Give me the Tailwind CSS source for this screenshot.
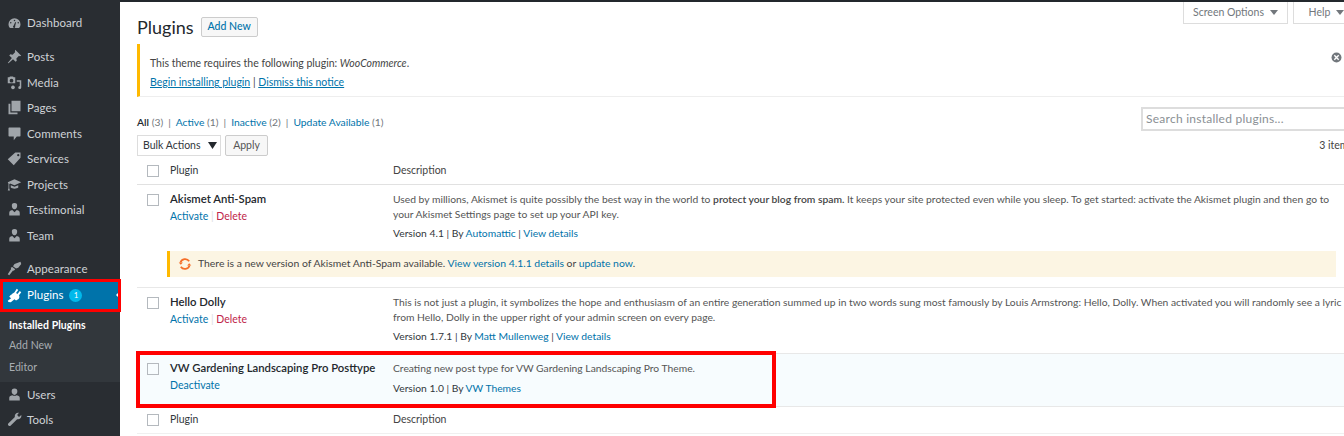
<!DOCTYPE html>
<html><head><meta charset="utf-8"><script src="https://cdn.jsdelivr.net/npm/@tailwindcss/browser@4"></script></head>
<body class="bg-white">
<div class="flex w-[1344px] h-[436px] overflow-hidden font-['Lato','Noto_Sans',sans-serif] text-[10.5px] text-[#444] bg-white">
<aside class="w-[120px] h-full shrink-0 bg-[#292d32] text-[#cfd2d6] text-[11.5px] tracking-[0.05px] relative flex flex-col pt-[10px]">
  <div class="flex items-center h-[26px] pl-[7px] gap-[5px]"><svg class="w-[15px] h-[15px] text-[#a0a5aa]" viewBox="0 0 20 20" fill="currentColor"><path d="M10 3a8 8 0 0 0-8 8c0 2 .8 3.900 2 5h12c1.200-1.100 2-3 2-5a8 8 0 0 0-8-8zm0 2a1 1 0 1 1 0 2 1 1 0 0 1 0-2zM5 10a1 1 0 1 1 0-2 1 1 0 0 1 0 2zm5.800 3.500a1.500 1.500 0 1 1-2-.5L11 8l1 .5zM15 10a1 1 0 1 1 0-2 1 1 0 0 1 0 2z" fill-rule="evenodd"/></svg><span>Dashboard</span></div>
  <div class="h-[8px]"></div>
  <div class="flex items-center h-[25.500px] pl-[7px] gap-[5px]"><svg class="w-[15px] h-[15px] text-[#a0a5aa]" viewBox="0 0 20 20" fill="currentColor"><path d="M11 1l8 8-2 .5-1-.5-3.500 3.500.5 3-1.500 1.500-3.500-3.500L2 19l-1-.5 5.500-6.500L3 8.500 4.500 7l3 .5L11 4l-.5-1z"/></svg><span>Posts</span></div>
  <div class="flex items-center h-[25.500px] pl-[7px] gap-[5px]"><svg class="w-[15px] h-[15px] text-[#a0a5aa]" viewBox="0 0 20 20" fill="currentColor"><path fill-rule="evenodd" d="M1 3h2l1-1h4l1 1h2v8H1zm5 2a2.500 2.500 0 1 0 0 5 2.500 2.500 0 0 0 0-5zM13 7h6v9.500a2 2 0 1 1-2-2V9h-4zM8 14a2.500 2.500 0 1 1-.1 0z"/></svg><span>Media</span></div>
  <div class="flex items-center h-[25.500px] pl-[7px] gap-[5px]"><svg class="w-[15px] h-[15px] text-[#a0a5aa]" viewBox="0 0 20 20" fill="currentColor"><path d="M6 1h12v14H6z"/><path d="M2 5h2.500v11.500H14V19H2z"/></svg><span>Pages</span></div>
  <div class="flex items-center h-[25.500px] pl-[7px] gap-[5px]"><svg class="w-[15px] h-[15px] text-[#a0a5aa]" viewBox="0 0 20 20" fill="currentColor"><path d="M3 2h14a1 1 0 0 1 1 1v10a1 1 0 0 1-1 1h-4l-4 5v-5H3a1 1 0 0 1-1-1V3a1 1 0 0 1 1-1z"/></svg><span>Comments</span></div>
  <div class="flex items-center h-[25.500px] pl-[7px] gap-[5px]"><svg class="w-[15px] h-[15px] text-[#a0a5aa]" viewBox="0 0 20 20" fill="currentColor"><path fill-rule="evenodd" d="M11 2h7v7l-9 10-8-8zm4 2a1.500 1.500 0 1 0 0 3 1.500 1.500 0 0 0 0-3z"/></svg><span>Services</span></div>
  <div class="flex items-center h-[25.500px] pl-[7px] gap-[5px]"><svg class="w-[15px] h-[15px] text-[#a0a5aa]" viewBox="0 0 20 20" fill="currentColor"><path d="M10 3L19 7l-9 4-6-2.500-1 1V15l1 3H1l1-3v-6L1 7z"/><path d="M5 11l5 2 5-2v3c-2 2-8 2-10 0z"/></svg><span>Projects</span></div>
  <div class="flex items-center h-[25.500px] pl-[7px] gap-[5px]"><svg class="w-[15px] h-[15px] text-[#a0a5aa]" viewBox="0 0 20 20" fill="currentColor"><path d="M10 1.500a3.500 3.500 0 0 1 3.500 4c0 2-1.500 4-3.500 4s-3.500-2-3.500-4a3.500 3.500 0 0 1 3.500-4zM7 10.500l3 3 3-3c3 .5 4 2 4 4V18H3v-3.500c0-2 1-3.500 4-4z"/></svg><span>Testimonial</span></div>
  <div class="flex items-center h-[25.500px] pl-[7px] gap-[5px]"><svg class="w-[15px] h-[15px] text-[#a0a5aa]" viewBox="0 0 20 20" fill="currentColor"><path d="M10 1.500a3.500 3.500 0 0 1 3.500 4c0 2-1.500 4-3.500 4s-3.500-2-3.500-4a3.500 3.500 0 0 1 3.500-4zM7 10.500l3 3 3-3c3 .5 4 2 4 4V18H3v-3.500c0-2 1-3.500 4-4z"/></svg><span>Team</span></div>
  <div class="h-[8px]"></div>
  <div class="flex items-center h-[25.500px] pl-[7px] gap-[5px]"><svg class="w-[15px] h-[15px] text-[#a0a5aa]" viewBox="0 0 20 20" fill="currentColor"><path d="M19 4l-1-3-8 3-2 3 4 3 3-1zM7 8l4 3-2 2-1-.5-5 6.500-2-1.500 4.500-7L5 9z"/></svg><span>Appearance</span></div>
  <div class="flex items-center h-[27px] pl-[7px] gap-[5px] bg-[#0073aa] text-white relative"><svg class="w-[15px] h-[15px]" viewBox="0 0 20 20" fill="currentColor"><path d="M13 1l2 1.500-3 4 2 1.500 3-4 2 1.500-3 4c1 2 .5 4-1 5.500l-3 1.500-2-1.500L5 19l-3-.5L1 17l4.500-3.500L3 11.500 4.500 9.500C7 8 8 6.500 10 5.500z"/></svg><span>Plugins</span><span class="ml-[1px] w-[13px] h-[13px] rounded-full bg-[#00b9eb] text-white text-[8px] flex items-center justify-center tracking-normal">1</span>
    <div class="absolute right-0 top-[9px] w-0 h-0 border-y-[4px] border-y-transparent border-r-[4px] border-r-white"></div></div>
  <div class="bg-[#32373c] h-[73px] pt-[8px] pl-[9px] text-[10.5px] flex flex-col text-[#a8adb2]">
    <div class="text-white font-bold leading-[16px]">Installed Plugins</div>
    <div class="leading-[16px] mt-[4px]">Add New</div>
    <div class="leading-[16px] mt-[6px]">Editor</div>
  </div>
  <div class="flex items-center h-[25.500px] pl-[7px] gap-[5px]"><svg class="w-[15px] h-[15px] text-[#a0a5aa]" viewBox="0 0 20 20" fill="currentColor"><path d="M10 2a3.800 3.800 0 0 1 3.800 4c0 2.200-1.600 4.500-3.800 4.500S6.200 8.200 6.200 6A3.800 3.800 0 0 1 10 2zM7 11c1.800 1 4.200 1 6 0 3 .5 4 2 4 3.500V18H3v-3.500C3 13 4 11.500 7 11z"/></svg><span>Users</span></div>
  <div class="flex items-center h-[25.500px] pl-[7px] gap-[5px]"><svg class="w-[15px] h-[15px] text-[#a0a5aa]" viewBox="0 0 20 20" fill="currentColor"><path d="M15 1a4.500 4.500 0 0 0-4.500 5.500L2 15a2 2 0 1 0 3 3l8.500-8.500A4.500 4.500 0 0 0 19 4l-3 2.500L13.500 4l2.500-3z"/></svg><span>Tools</span></div>
  <div class="absolute left-0 top-[279px] w-[121px] h-[33px] border-[3px] border-[#f00] z-10"></div>
</aside>
<main class="flex-1 min-w-0 relative">
  <div class="h-[2px] bg-[#23282d]"></div>
  <div class="w-[1223px] ml-[17px]">
    <div class="flex justify-end h-[22px] gap-[5px]">
      <div class="w-[105px] h-[22px] border border-t-0 border-[#ddd] bg-white text-[#72777c] flex items-center justify-center gap-[6px]">Screen Options <svg class="w-[8px] h-[5px]" viewBox="0 0 8 5" fill="#72777c"><path d="M0 0h8L4 5z"/></svg></div>
      <div class="w-[67px] h-[22px] border border-t-0 border-[#ddd] bg-white text-[#72777c] flex items-center justify-center gap-[6px]">Help <svg class="w-[8px] h-[5px]" viewBox="0 0 8 5" fill="#72777c"><path d="M0 0h8L4 5z"/></svg></div>
    </div>
    <div class="flex items-center h-[22px] gap-[7px] -mt-[8px]">
      <h1 class="text-[18px] leading-[22px] text-[#23282d]">Plugins</h1>
      <span class="h-[20px] px-[6px] border border-[#ccc] rounded-[2px] bg-[#f7f7f7] text-[#0073aa] flex items-center font-medium">Add New</span>
    </div>
    <div class="mt-[6px] h-[53px] w-full border-l-[3px] border-[#ffb900] border-b border-b-[#eee] relative pl-[10px] pt-[11px]">
      <p class="leading-[16px]">This theme requires the following plugin: <em>WooCommerce</em>.</p>
      <p class="leading-[16px] mt-[3px]"><a class="underline text-[#0073aa]">Begin installing plugin</a> | <a class="underline text-[#0073aa]">Dismiss this notice</a></p>
      <svg class="absolute left-[1191px] top-[8px] w-[11px] h-[11px] text-[#72777c]" viewBox="0 0 20 20"><circle cx="10" cy="10" r="9" fill="currentColor"/><path d="M6 6l8 8M14 6l-8 8" stroke="#fff" stroke-width="2.500"/></svg>
    </div>
    <div class="flex justify-between items-start mt-[10px] h-[21px]">
      <div class="pt-[7px] leading-[16px] text-[10.3px] text-[#72777c]"><b class="text-[#23282d] font-semibold">All</b> (3)<span class="mx-[5px]">|</span><a class="text-[#0073aa]">Active</a> (1)<span class="mx-[5px]">|</span><a class="text-[#0073aa]">Inactive</a> (2)<span class="mx-[5px]">|</span><a class="text-[#0073aa]">Update Available</a> (1)</div>
      <div class="w-[219px] h-[24px] border-2 border-[#ddd] text-[#8a8f94] text-[12px] pl-[3px] flex items-center tracking-[0.25px] bg-white">Search installed plugins...</div>
    </div>
    <div class="flex justify-between items-center mt-[7px] h-[21px]">
      <div class="flex gap-[4px]">
        <div class="w-[84px] h-[21px] border border-[#ddd] pl-[5px] pr-[3px] flex items-center justify-between text-[#32373c]">Bulk Actions <svg class="w-[9px] h-[7px]" viewBox="0 0 9 7" fill="#23282d"><path d="M0 0h9L4.500 7z"/></svg></div>
        <div class="w-[43px] h-[21px] border border-[#ccc] rounded-[2px] bg-[#f7f7f7] text-[#555] flex items-center justify-center">Apply</div>
      </div>
      <div class="mr-[7px] text-[#444]">3 items</div>
    </div>
    <div class="mt-[1px]">
      <div class="flex h-[28px] items-center border-b border-[#e1e1e1]">
        <div class="w-[33px] shrink-0 pl-[10px]"><div class="w-[12px] h-[12px] border border-[#b4b9be]"></div></div>
        <div class="w-[223px] shrink-0 text-[#32373c] pt-[1px]">Plugin</div><div class="pt-[1px]">Description</div>
      </div>
      <div class="flex h-[66px] items-start pt-[7px]">
        <div class="w-[33px] shrink-0 pl-[10px] pt-[2px]"><div class="w-[12px] h-[12px] border border-[#b4b9be]"></div></div>
        <div class="w-[223px] shrink-0"><div class="text-[#23282d] font-semibold leading-[14px] text-[11.300px]">Akismet Anti-Spam</div><div class="mt-[2px] leading-[16px]"><a class="text-[#0073aa]">Activate</a> <span class="text-[#ddd]">|</span> <a class="text-[#c0254a]">Delete</a></div></div>
        <div class="text-[10.300px] whitespace-nowrap leading-[14.500px] text-[#555]">Used by millions, Akismet is quite possibly the best way in the world to <b class="font-semibold text-[#444]">protect your blog from spam.</b> It keeps your site protected even while you sleep. To get started: activate the Akismet plugin and then go to<br>your Akismet Settings page to set up your API key.<div class="mt-[5px] text-[#32373c]">Version 4.1 | By <a class="text-[#0073aa]">Automattic</a> | <a class="text-[#0073aa]">View details</a></div></div>
      </div>
      <div class="h-[37px] border-b border-[#e8e8e8] pl-[30px] pr-[24px]">
        <div class="h-[26px] bg-[#fcf5e3] border-l-[3px] border-[#ffb900] flex items-center pl-[8px] gap-[6px] whitespace-nowrap text-[10.400px]">
          <svg class="w-[14px] h-[14px] text-[#f56e28]" viewBox="0 0 20 20" fill="none" stroke="currentColor" stroke-width="2.500"><path d="M3.500 8A7 7 0 0 1 16 6M16.500 12A7 7 0 0 1 4 14"/><path d="M1 8h6l-3 3zM19 12h-6l3-3z" fill="currentColor" stroke="none"/></svg>
          <span>There is a new version of Akismet Anti-Spam available. <a class="text-[#0073aa]">View version 4.1.1 details</a> or <a class="text-[#0073aa]">update now</a>.</span>
        </div>
      </div>
      <div class="flex h-[66px] items-start pt-[7px] border-b border-[#e8e8e8]">
        <div class="w-[33px] shrink-0 pl-[10px] pt-[2px]"><div class="w-[12px] h-[12px] border border-[#b4b9be]"></div></div>
        <div class="w-[223px] shrink-0"><div class="text-[#23282d] font-semibold leading-[14px] text-[11.300px]">Hello Dolly</div><div class="mt-[2px] leading-[16px]"><a class="text-[#0073aa]">Activate</a> <span class="text-[#ddd]">|</span> <a class="text-[#c0254a]">Delete</a></div></div>
        <div class="text-[10.300px] whitespace-nowrap leading-[14.500px] text-[#555]">This is not just a plugin, it symbolizes the hope and enthusiasm of an entire generation summed up in two words sung most famously by Louis Armstrong: Hello, Dolly. When activated you will randomly see a lyric<br>from Hello, Dolly in the upper right of your admin screen on every page.<div class="mt-[5px] text-[#32373c]">Version 1.7.1 | By <a class="text-[#0073aa]">Matt Mullenweg</a> | <a class="text-[#0073aa]">View details</a></div></div>
      </div>
      <div class="flex h-[53px] items-start pt-[7px] bg-[#f7fcfe] border-b border-[#e8e8e8]">
        <div class="w-[33px] shrink-0 pl-[10px] pt-[2px]"><div class="w-[12px] h-[12px] border border-[#b4b9be]"></div></div>
        <div class="w-[223px] shrink-0"><div class="text-[#23282d] font-semibold leading-[14px] text-[11.300px]">VW Gardening Landscaping Pro Posttype</div><div class="mt-[2px] leading-[16px]"><a class="text-[#0073aa]">Deactivate</a></div></div>
        <div class="text-[10.300px] whitespace-nowrap leading-[14.500px] text-[#555]">Creating new post type for VW Gardening Landscaping Pro Theme.<div class="mt-[5px] text-[#32373c]">Version 1.0 | By <a class="text-[#0073aa]">VW Themes</a></div></div>
      </div>
      <div class="flex h-[27px] items-center border-b border-[#f0f0f0]">
        <div class="w-[33px] shrink-0 pl-[10px]"><div class="w-[12px] h-[12px] border border-[#b4b9be]"></div></div>
        <div class="w-[223px] shrink-0 text-[#32373c]">Plugin</div><div>Description</div>
      </div>
    </div>
  </div>
  <div class="absolute left-[16px] top-[351px] w-[640px] h-[57px] border-[4px] border-[#f00]"></div>
</main>
</div>
</body></html>
